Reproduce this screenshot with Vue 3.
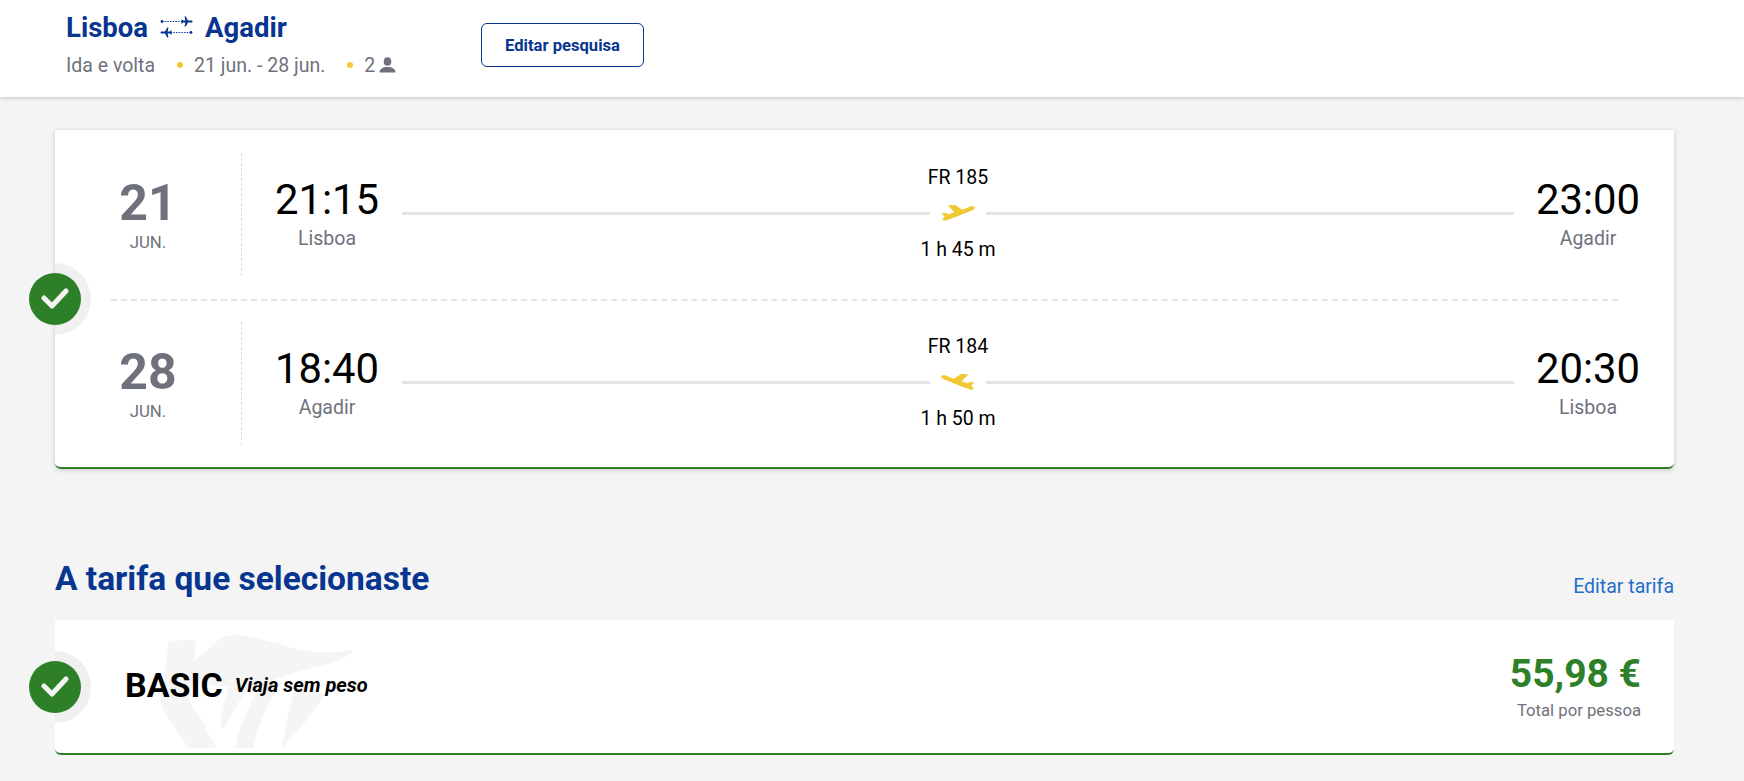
<script setup>
const legs = [
  { day: '21', month: 'JUN.', dep: '21:15', from: 'Lisboa', flight: 'FR 185', dur: '1 h 45 m', arr: '23:00', to: 'Agadir', back: false },
  { day: '28', month: 'JUN.', dep: '18:40', from: 'Agadir', flight: 'FR 184', dur: '1 h 50 m', arr: '20:30', to: 'Lisboa', back: true }
]
</script>

<template>
  <div class="page">
    <header class="top">
      <div class="trip">
        <div class="route">
          <span>Lisboa</span>
          <svg class="swap" width="33" height="22" viewBox="0 0 33 22" fill="none">
            <path d="M2 5.500H24" stroke="#073590" stroke-width="1" stroke-dasharray="1.500 1.200" />
            <circle cx="2" cy="5.500" r="1.400" fill="#073590" />
            <path d="M24.500 .5h1.300l2.200 4h3.300c.8 0 1.200.4 1.200 1s-.4 1-1.200 1H28l-2.200 4h-1.300l.9-4h-2.400l-.8 1h-1l.5-2-.5-2h1l.8 1h2.400z" fill="#073590" />
            <path d="M31 16.500H9" stroke="#073590" stroke-width="1" stroke-dasharray="1.500 1.200" />
            <circle cx="31" cy="16.500" r="1.400" fill="#073590" />
            <path d="M8.500 11.500H7.200l-2.200 4H1.700c-.8 0-1.200.4-1.200 1s.4 1 1.200 1H5l2.200 4h1.300l-.9-4H10l.8 1h1l-.5-2 .5-2h-1l-.8 1H7.600z" fill="#073590" />
          </svg>
          <span>Agadir</span>
        </div>
        <div class="meta">
          <span>Ida e volta</span>
          <i class="dot"></i>
          <span>21 jun. - 28 jun.</span>
          <i class="dot"></i>
          <span>2</span>
          <svg class="person" width="17" height="16" viewBox="0 0 17 16">
            <ellipse cx="8.500" cy="4.500" rx="3.800" ry="4.300" fill="#6f727c" />
            <path d="M.5 15.500c0-3.800 3.200-5.600 8-5.600s8 1.800 8 5.600z" fill="#6f727c" />
          </svg>
        </div>
      </div>
      <button class="edit-search" type="button">Editar pesquisa</button>
    </header>

    <main class="content">
      <section class="card flights">
        <div class="badge"><svg width="28" height="21" viewBox="0 0 28 21"><path d="M3 10l8 8L25 3" fill="none" stroke="#f4f4f4" stroke-width="5" stroke-linecap="round" stroke-linejoin="round" /></svg></div>
        <template v-for="(leg, i) in legs" :key="leg.flight">
          <div v-if="i === 1" class="separator"></div>
          <div class="leg">
            <div class="date">
              <strong>{{ leg.day }}</strong>
              <span>{{ leg.month }}</span>
            </div>
            <div class="place">
              <b>{{ leg.dep }}</b>
              <span>{{ leg.from }}</span>
            </div>
            <div class="path">
              <div class="flight-no">{{ leg.flight }}</div>
              <div class="track">
                <i></i>
                <svg :class="{ flip: leg.back }" width="36" height="18" viewBox="30 15 106 54">
                  <path d="M52 19L74 18L96 32L122 22Q134 21 134 26Q132 32 122 35L78 53L45 65L35 63L43 52L33 44L45 41L55 46L72 40Z" fill="#f1c933" />
                </svg>
                <i></i>
              </div>
              <div class="duration">{{ leg.dur }}</div>
            </div>
            <div class="place">
              <b>{{ leg.arr }}</b>
              <span>{{ leg.to }}</span>
            </div>
          </div>
        </template>
      </section>

      <div class="fare-head">
        <h2>A tarifa que selecionaste</h2>
        <a>Editar tarifa</a>
      </div>

      <section class="card fare">
        <div class="badge"><svg width="28" height="21" viewBox="0 0 28 21"><path d="M3 10l8 8L25 3" fill="none" stroke="#f4f4f4" stroke-width="5" stroke-linecap="round" stroke-linejoin="round" /></svg></div>
        <svg class="harp" width="220" height="128" viewBox="0 15 660 385">
          <path d="M55 62L125 60Q142 62 138 80L130 125Q165 100 200 65Q225 42 270 45Q350 60 430 85Q520 108 600 90Q612 92 605 100Q560 130 480 145L300 200L200 200L130 180L115 230Q118 260 150 295Q165 310 170 335L200 385L115 385L40 275Q25 240 35 210L50 110Z" fill="#f5f5f5" />
          <path d="M240 190L305 190Q260 250 225 320Q212 335 210 315Q218 260 240 190Z" fill="#f5f5f5" />
          <path d="M335 190L395 190Q330 280 310 385L255 385Q270 300 335 190Z" fill="#f5f5f5" />
          <path d="M440 190L525 225Q470 310 395 385Q410 290 440 190Z" fill="#f5f5f5" />
        </svg>
        <div class="fare-name">
          <strong>BASIC</strong>
          <em>Viaja sem peso</em>
        </div>
        <div class="price">
          <strong>55,98 €</strong>
          <span>Total por pessoa</span>
        </div>
      </section>
    </main>
  </div>
</template>

<style scoped>
.page {
  height: 781px;
  overflow: hidden;
  background: #f4f4f4;
  font-family: Roboto, "Liberation Sans", sans-serif;
}
.top {
  height: 97px;
  box-sizing: border-box;
  background: #fff;
  box-shadow: 0 1px 4px rgba(0, 0, 0, .22);
  padding: 10px 0 0 66px;
  display: flex;
  align-items: flex-start;
}
.trip { width: 415px; }
.route {
  display: flex;
  align-items: center;
  gap: 12px;
  height: 34px;
  font-size: 27.500px;
  font-weight: 700;
  color: #073590;
}
.swap { flex: none; }
.meta {
  display: flex;
  align-items: center;
  margin-top: 9px;
  height: 24px;
  font-size: 19.500px;
  color: #6f727c;
}
.dot {
  width: 6px;
  height: 6px;
  margin: 0 11px 0 22px;
  border-radius: 50%;
  background: #f1c933;
}
.person { margin-left: 4px; }
.edit-search {
  margin-top: 13px;
  width: 163px;
  height: 44px;
  background: #fff;
  border: 1px solid #073590;
  border-radius: 6px;
  color: #073590;
  font: 700 16.600px Roboto, sans-serif;
}
.content { padding: 33px 70px 0 55px; }
.card {
  position: relative;
  z-index: 0;
  background: #fff;
  border-bottom: 2px solid #2d8028;
  border-radius: 0 0 6px 6px;
}
.flights {
  box-sizing: border-box;
  height: 339px;
  padding-top: 23px;
  box-shadow: 0 1px 5px rgba(0, 0, 0, .18);
}
.badge {
  position: absolute;
  left: -26px;
  top: 50%;
  width: 52px;
  height: 52px;
  margin-top: -26px;
  border-radius: 50%;
  background: #2d8028;
  display: flex;
  align-items: center;
  justify-content: center;
}
.badge::before {
  content: "";
  position: absolute;
  left: 26px;
  top: -10px;
  width: 36px;
  height: 72px;
  border-radius: 0 36px 36px 0;
  background: #f0f0f0;
  z-index: -1;
}
.leg {
  height: 123px;
  display: flex;
  align-items: stretch;
  padding-right: 34px;
}
.separator {
  height: 0;
  margin: 23px 56px 21px 56px;
  border-top: 2px dashed #e4e4e4;
}
.date {
  width: 187px;
  box-sizing: border-box;
  border-right: 1px dashed #dcdcdc;
  display: flex;
  flex-direction: column;
  align-items: center;
  padding-top: 22px;
  color: #6f727c;
}
.date strong { font-size: 50px; line-height: 56px; }
.date span { font-size: 16.800px; line-height: 20px; margin-top: 1px; }
.place {
  width: 104px;
  margin-left: 33px;
  text-align: center;
  padding-top: 24px;
}
.place:last-child { margin: 0; }
.place b {
  display: block;
  font-weight: 400;
  font-size: 41.800px;
  line-height: 46px;
  color: #000;
}
.place span {
  display: block;
  font-size: 19.500px;
  line-height: 24px;
  margin-top: 4px;
  color: #6f727c;
}
.path {
  flex: 1;
  margin: 0 22px 0 23px;
  text-align: center;
  color: #000;
  font-size: 19.500px;
}
.flight-no { line-height: 24px; margin-top: 13px; }
.track {
  display: flex;
  align-items: center;
  height: 24px;
  margin-top: 11px;
}
.track i {
  flex: 1;
  height: 3px;
  background: #e4e4e4;
}
.track svg { margin: 0 10px; }
.track svg.flip { transform: scaleX(-1); }
.duration { line-height: 24px; margin-top: 13px; }
.fare-head {
  display: flex;
  justify-content: space-between;
  align-items: flex-end;
  margin-top: 88px;
  height: 44px;
}
.fare-head h2 {
  margin: 0;
  font-size: 33.500px;
  line-height: 44px;
  font-weight: 700;
  color: #073590;
}
.fare-head a {
  font-size: 19.500px;
  line-height: 24px;
  color: #1f6ec9;
  margin-bottom: 2px;
}
.fare {
  margin-top: 19px;
  height: 135px;
  box-sizing: border-box;
  display: flex;
  justify-content: space-between;
  align-items: flex-start;
  padding: 0 33px 0 70px;
}
.harp {
  position: absolute;
  left: 95px;
  top: 5px;
}
.fare-name {
  position: relative;
  display: flex;
  align-items: flex-start;
  gap: 12px;
  margin-top: 45px;
  color: #000;
}
.fare-name strong { font-size: 34px; line-height: 40px; }
.fare-name em { font-size: 20px; line-height: 24px; margin-top: 8px; font-weight: 700; }
.price {
  display: flex;
  flex-direction: column;
  align-items: flex-end;
  margin-top: 31px;
}
.price strong {
  font-size: 39px;
  line-height: 46px;
  color: #2d8028;
}
.price span {
  font-size: 16.700px;
  line-height: 22px;
  margin-top: 3px;
  color: #6f727c;
}
</style>
